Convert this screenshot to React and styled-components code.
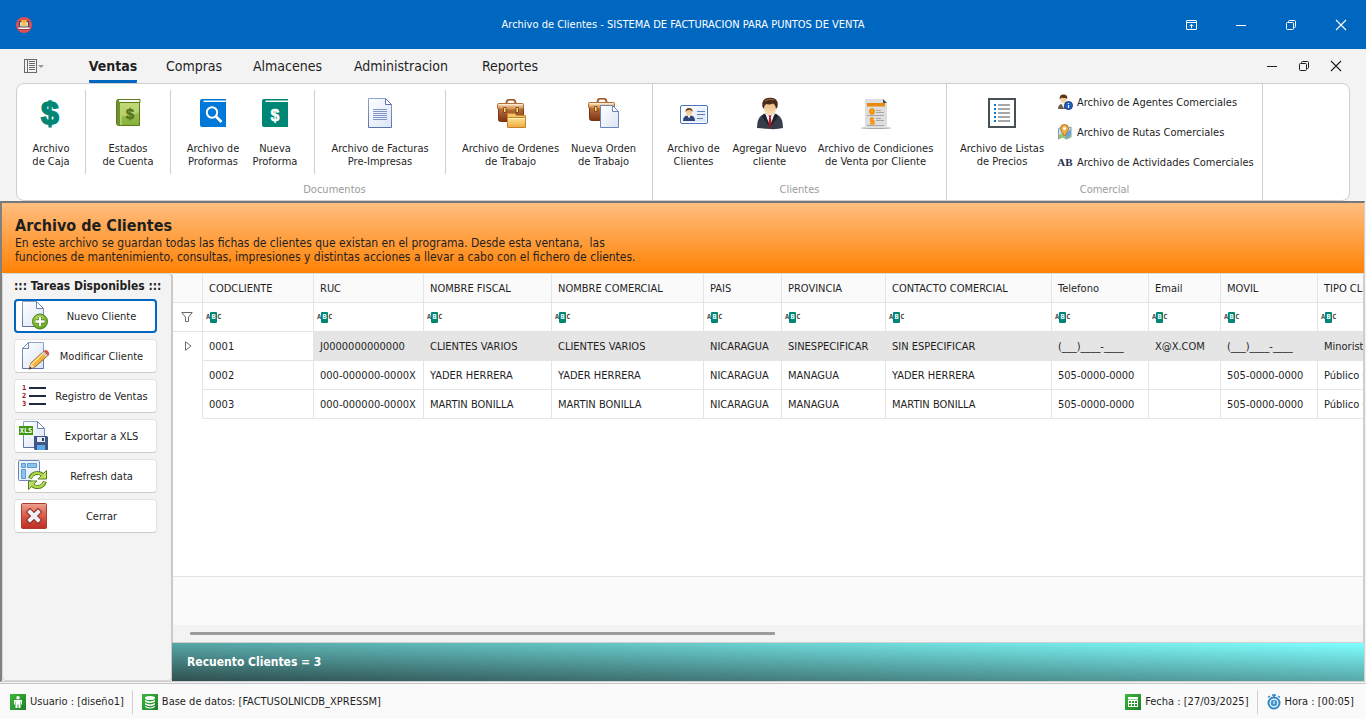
import React from 'react';
import styled, { createGlobalStyle } from 'styled-components';

const GlobalStyle = createGlobalStyle`
  * {
    box-sizing: border-box;
  }

  body {
    margin: 0;
    background: #f3f3f3;
    color: #1f1f1f;
    font-family: "DejaVu Sans Condensed", Tahoma, "Noto Sans", sans-serif;
    font-size: 11px;
    line-height: 13px;
  }

  button,
  input {
    font: inherit;
    color: inherit;
    margin: 0;
    padding: 0;
    border: 0;
    background: transparent;
  }

  svg {
    display: block;
    flex: none;
    overflow: visible;
  }
`;

const Window = styled.div`
  display: flex;
  flex-direction: column;
  min-height: 100vh;
  overflow: hidden;
`;

/* ---------- title bar ---------- */

const TitleBar = styled.header`
  display: grid;
  grid-template-columns: 1fr auto 1fr;
  align-items: center;
  height: 49px;
  background: #0067c0;
  color: #fff;
`;

const AppMenu = styled.div`
  padding-left: 16px;
`;

const Title = styled.h1`
  margin: 0;
  font-size: 11px;
  line-height: 14px;
  font-weight: 400;
`;

const WindowButtons = styled.div`
  display: flex;
  justify-content: flex-end;
`;

const WindowButton = styled.button`
  display: flex;
  align-items: center;
  justify-content: center;
  width: ${(p) => (p.$small ? 32 : 50)}px;
  height: 32px;
`;

/* ---------- ribbon ---------- */

const TabBar = styled.nav`
  display: flex;
  align-items: center;
  height: 34px;
  padding: 0 14px 0 24px;
`;

const FileMenu = styled.button`
  display: flex;
  align-items: center;
  width: 51px;
  height: 34px;
`;

const Tab = styled.button`
  display: flex;
  justify-content: center;
  width: ${(p) => p.$width}px;
  height: 34px;
  font-size: 14px;
  line-height: 34px;
  font-weight: ${(p) => (p.$active ? 700 : 400)};

  span {
    height: 34px;
    border-bottom: 3px solid ${(p) => (p.$active ? '#0067c0' : 'transparent')};
    border-radius: 1px;
  }
`;

const Spacer = styled.div`
  flex: 1;
`;

const Ribbon = styled.section`
  display: flex;
  height: 118px;
  margin: 0 16px;
  border: 1px solid #cfcfcf;
  border-radius: 8px;
  background: #fff;
`;

const Group = styled.section`
  display: flex;
  flex-direction: column;
  width: ${(p) => p.$width}px;
  border-right: 1px solid #cfcfcf;
`;

const GroupBody = styled.div`
  display: flex;
  height: 99px;
  padding-top: 3px;
`;

const GroupCaption = styled.h2`
  margin: 0;
  font-size: 11px;
  font-weight: 400;
  color: #9b9b9b;
  text-align: center;
`;

const SubGroup = styled.div`
  display: flex;
  justify-content: center;
  gap: 1px;
  flex: ${(p) => (p.$width ? 'none' : 1)};
  width: ${(p) => (p.$width ? `${p.$width}px` : 'auto')};
  height: 84px;
  margin-top: 3px;
  border-right: ${(p) => (p.$width ? '1px solid #cfcfcf' : 'none')};
`;

const LargeButton = styled.button`
  display: flex;
  flex-direction: column;
  align-items: center;
  gap: 13px;
  width: ${(p) => p.$width}px;
  padding-top: 7px;
  white-space: pre;
`;

const SmallList = styled.div`
  display: flex;
  flex-direction: column;
  width: 205px;
`;

const SmallButton = styled.button`
  display: flex;
  align-items: center;
  gap: 4px;
  height: 30px;
  white-space: nowrap;
`;

/* ---------- client window ---------- */

const Frame = styled.main`
  display: flex;
  flex-direction: column;
  flex: 1;
  margin-right: 1px;
  border: 1px solid #cfcfcf;
  border-top: 2px solid #77777a;
  border-left: 2px solid #808080;
`;

const Banner = styled.div`
  height: 70px;
  padding: 13px 13px 0;
  background: linear-gradient(#ffbe80, #ff8204);

  h2 {
    margin: 0;
    font-size: 16px;
    line-height: 20px;
  }

  p {
    margin: 0;
    font-size: 12px;
    line-height: 14px;
    white-space: pre-wrap;
  }
`;

const Body = styled.div`
  display: flex;
  flex: 1;
`;

const TaskPanel = styled.aside`
  display: flex;
  flex-direction: column;
  gap: 6px;
  width: 171px;
  padding: 5px 0 5px 11px;
  border: 1px solid #d6d6d6;
  border-right-width: 2px;
  border-right-color: #cacaca;
  border-radius: 4px;

  h3 {
    margin: 0;
    font-size: 12px;
    line-height: 14px;
    white-space: nowrap;
  }
`;

const TaskButton = styled.button`
  display: flex;
  align-items: center;
  width: 143px;
  height: 34px;
  padding: 0 ${(p) => (p.$active ? 2 : 3)}px;
  border: ${(p) => (p.$active ? '2px solid #0067c0' : '1px solid #e2e2e2')};
  border-bottom-color: ${(p) => (p.$active ? '#0067c0' : '#cccccc')};
  border-radius: 4px;
  background: #fff;

  span {
    flex: 1;
    text-align: center;
    white-space: nowrap;
  }
`;

const DataSide = styled.section`
  display: flex;
  flex-direction: column;
  flex: 1;
  min-width: 0;
`;

const Grid = styled.div`
  flex: 1;
  overflow: hidden;
  background: #fff;
  border-top: 1px solid #dcdcdc;
  border-right: 1px solid #cfcfcf;
`;

const Table = styled.table`
  width: 1254px;
  table-layout: fixed;
  border-collapse: separate;
  border-spacing: 0;

  th,
  td {
    height: 29px;
    padding: 0 0 0 6px;
    border-right: 1px solid #e4e4e4;
    border-bottom: 1px solid #e4e4e4;
    font-weight: 400;
    text-align: left;
    white-space: nowrap;
    overflow: hidden;
  }

  thead th {
    background: #fafafa;
  }
`;

const FilterCell = styled.td`
  && {
    padding-left: ${(p) => (p.$icon ? 8 : 3)}px;
  }
`;

const FilterBox = styled.label`
  display: flex;
  align-items: center;
  gap: 4px;

  input {
    flex: 1;
    min-width: 0;
    outline: none;
  }
`;

const Abc = styled.span`
  display: flex;
  align-items: center;
  font: 700 7px/11px "DejaVu Sans Mono", monospace;
  color: #4a4a4a;

  b {
    width: 7px;
    border-radius: 1px;
    background: #008675;
    color: #fff;
    text-align: center;
  }
`;

const Indicator = styled.td`
  && {
    padding-left: 11px;
    border-bottom-color: transparent;
  }
`;

const DataRow = styled.tr`
  td:nth-child(n + 3) {
    background: ${(p) => (p.$selected ? '#e5e5e5' : '#fff')};
    border-color: ${(p) => (p.$selected ? '#e5e5e5' : '#e4e4e4')};
  }
`;

const GridFooter = styled.div`
  height: 49px;
  border-top: 1px solid #e4e4e4;
  border-right: 1px solid #cfcfcf;
  background: #fafafa;
`;

const ScrollTrack = styled.div`
  display: flex;
  align-items: center;
  height: 18px;
  padding: 0 4px 0 17px;
  border-right: 1px solid #cfcfcf;
  border-bottom: 1px solid #cfcfcf;
`;

const ScrollThumb = styled.div`
  width: 50%;
  height: 3px;
  border-radius: 1px;
  background: #9b9b9b;
`;

const CountBar = styled.div`
  height: 38px;
  margin-left: -1px;
  padding-left: 15px;
  background: linear-gradient(to top right, #2f4f4f, #80ffff);
  color: #fff;
  font-size: 12px;
  font-weight: 700;
  line-height: 38px;
`;

/* ---------- status bar ---------- */

const StatusBar = styled.footer`
  display: flex;
  align-items: center;
  height: 36px;
  margin-top: 1px;
  padding: 0 12px 0 10px;
  border-top: 1px solid #c6c6c6;
  background: #fafafa;
`;

const StatusItem = styled.div`
  display: flex;
  align-items: center;
  gap: 4px;
  white-space: nowrap;

  & + & {
    margin-left: 8px;
    padding-left: 9px;
    border-left: 1px solid #cfcfcf;
    height: 24px;
  }
`;

/* ---------- icons ---------- */

const Svg = ({ w = 32, h = w, children, ...rest }) => (
  <svg width={w} height={h} viewBox={`0 0 ${w} ${h}`} fill="none" aria-hidden="true" {...rest}>
    {children}
  </svg>
);

const Gradients = () => (
  <svg width="0" height="0" style={{ position: 'absolute' }} aria-hidden="true">
    <defs>
      <linearGradient id="paper" x1="0" y1="0" x2="1" y2="1">
        <stop offset="0" stopColor="#ffffff" />
        <stop offset="1" stopColor="#dbe5f5" />
      </linearGradient>
      <linearGradient id="paperEdge" x1="0" y1="0" x2="0" y2="1">
        <stop offset="0" stopColor="#8fa3cf" />
        <stop offset="1" stopColor="#5a73ad" />
      </linearGradient>
      <linearGradient id="bookGreen" x1="0" y1="0" x2="0" y2="1">
        <stop offset="0" stopColor="#b3cf63" />
        <stop offset="1" stopColor="#86b03a" />
      </linearGradient>
      <linearGradient id="leather" x1="0" y1="0" x2="0" y2="1">
        <stop offset="0" stopColor="#c9794a" />
        <stop offset="1" stopColor="#7c3410" />
      </linearGradient>
      <linearGradient id="flap" x1="0" y1="0" x2="0" y2="1">
        <stop offset="0" stopColor="#f3cd9f" />
        <stop offset="1" stopColor="#d08a48" />
      </linearGradient>
      <linearGradient id="folder" x1="0" y1="0" x2="0" y2="1">
        <stop offset="0" stopColor="#ffe596" />
        <stop offset="1" stopColor="#eeaa3e" />
      </linearGradient>
      <linearGradient id="face" x1="0" y1="0" x2="0" y2="1">
        <stop offset="0" stopColor="#e8b27c" />
        <stop offset="1" stopColor="#fbe0b5" />
      </linearGradient>
      <linearGradient id="red" x1="0" y1="0" x2="0" y2="1">
        <stop offset="0" stopColor="#eda291" />
        <stop offset="0.45" stopColor="#d9604d" />
        <stop offset="1" stopColor="#bd2d22" />
      </linearGradient>
      <linearGradient id="status" x1="0" y1="0" x2="1" y2="1">
        <stop offset="0" stopColor="#3cb83c" />
        <stop offset="1" stopColor="#1e7d28" />
      </linearGradient>
      <radialGradient id="greenBall" cx="0.4" cy="0.3" r="0.8">
        <stop offset="0" stopColor="#b9e05c" />
        <stop offset="1" stopColor="#4f9a14" />
      </radialGradient>
    </defs>
  </svg>
);

const MinimizeIcon = () => (
  <Svg w={12}><path d="M1 6.5h10" stroke="currentColor" /></Svg>
);

const RestoreIcon = () => (
  <Svg w={12}>
    <rect x="1.5" y="3.5" width="7" height="7" rx="1" stroke="currentColor" />
    <path d="M3.500 3.500V2.500a1 1 0 0 1 1-1h5a1 1 0 0 1 1 1v5a1 1 0 0 1-1 1h-1" stroke="currentColor" />
  </Svg>
);

const CloseIcon = () => (
  <Svg w={12}><path d="M1 1l10 10M11 1L1 11" stroke="currentColor" strokeWidth="1.1" /></Svg>
);

const RibbonModeIcon = () => (
  <Svg w={12}>
    <rect x="1.500" y="1.500" width="10" height="9" rx="0.500" stroke="currentColor" />
    <path d="M1.500 3.500h10M6.500 9.500V5.500M4.500 7.300l2-2 2 2" stroke="currentColor" />
  </Svg>
);

const AppIcon = () => (
  <Svg w={16}>
    <circle cx="8" cy="8" r="8" fill="#e04f4f" />
    <path d="M3 4h10v6.500H3z" fill="#324a5e" />
    <path d="M4 5h8v4.500H4z" fill="#cfd9e2" />
    <path d="M5.500 3h5v6h-5z" fill="#ffc74d" />
    <path d="M7.300 3h1.400v2.500H7.300z" fill="#e8912c" />
    <path d="M2.500 10.500h11v1.500h-11z" fill="#f4f6f8" />
    <path d="M2.500 12h11v.8h-11z" fill="#8a3340" />
  </Svg>
);

const FileMenuIcon = () => (
  <Svg w={20} h={14}>
    <rect x="0.5" y="0.500" width="12" height="13" stroke="#6a6a6a" />
    <path d="M3.500 0v14" stroke="#6a6a6a" />
    <path d="M5 2.500h6M5 4.500h6M5 6.500h6M5 8.500h6M5 10.500h6" stroke="#6a6a6a" />
    <path d="M14 6h6l-3 3z" fill="#9a9a9a" />
  </Svg>
);

const DollarIcon = () => (
  <Svg>
    <text x="15" y="27" textAnchor="middle" fontFamily="Liberation Sans" fontWeight="700" fontSize="32" fill="#008675" stroke="#008675" strokeWidth="1.600">$</text>
  </Svg>
);

const LedgerIcon = () => (
  <Svg>
    <path d="M6 2.500h22v3H5z" fill="#eef3df" stroke="#5e7c22" />
    <path d="M4.500 4.500q0-2 2-2v3h21v23h-21q-2 0-2-2z" fill="url(#bookGreen)" stroke="#5b7a20" />
    <path d="M5 4h3v24H6.500q-1.500 0-1.500-1.500z" fill="#6f9130" />
    <path d="M9 6v22" stroke="#d3e59c" />
    <path d="M10 6h17v9q-8 5-17 4z" fill="#d3e58e" opacity="0.5" />
    <path d="M7 4h20" stroke="#fff" strokeWidth="1.500" />
    <text x="18" y="22" textAnchor="middle" fontFamily="Liberation Sans" fontWeight="700" fontSize="15" fill="#55731b" stroke="#55731b" strokeWidth="0.500">$</text>
  </Svg>
);

const SearchBookIcon = () => (
  <Svg>
    <path d="M5 2h24v1.500H6.500V5H29v25H5a2 2 0 0 1-2-2V4a2 2 0 0 1 2-2z" fill="#0078d7" />
    <circle cx="15" cy="15.500" r="5.200" stroke="#fff" strokeWidth="2" />
    <path d="M19 19.500l5.500 5.500" stroke="#fff" strokeWidth="2.600" />
  </Svg>
);

const DollarBookIcon = () => (
  <Svg>
    <path d="M5 2h24v1.500H6.500V5H29v25H5a2 2 0 0 1-2-2V4a2 2 0 0 1 2-2z" fill="#008675" />
    <text x="16" y="23.500" textAnchor="middle" fontFamily="Liberation Sans" fontWeight="700" fontSize="16" fill="#fff" stroke="#fff" strokeWidth="0.500">$</text>
  </Svg>
);

const DocumentIcon = () => (
  <Svg>
    <path d="M4.500 1.500h17l6 6v23h-23z" fill="url(#paper)" stroke="url(#paperEdge)" />
    <path d="M21.500 1.500v6h6z" fill="#fff" stroke="#5f76ad" />
    <path d="M9 12.500h14M9 14.500h14M9 16.500h14M9 18.500h14M9 20.500h14M9 22.500h14" stroke="#7f95c8" />
  </Svg>
);

const Briefcase = () => (
  <>
    <path d="M11.500 7q0-4 2-4h5q2 0 2 4" stroke="#9a5a36" strokeWidth="2" />
    <path d="M12.500 6q0-2.500 1.500-2.500h4q1.500 0 1.500 2.500" stroke="#d9a883" strokeWidth="0.800" />
    <rect x="3.500" y="9.500" width="25" height="15" rx="2" fill="url(#leather)" stroke="#7a3612" />
    <path d="M2.500 7.500q0-1 1-1h24q1 0 1 1v4q-6 1.500-13 1.500t-13-1.500z" fill="url(#flap)" stroke="#b0703a" />
    <path d="M3.500 7h24v1.500h-24z" fill="#fae5c8" />
    <path d="M8.500 10.500h2.500v5H8.500zM21 10.500h2.500v5H21z" fill="#ffe26a" stroke="#6e3510" strokeWidth="0.800" />
  </>
);

const OrdersIcon = () => (
  <Svg>
    <Briefcase />
    <path d="M12.500 30.500v-14h7l2 2h9v12z" fill="#f2c767" stroke="#c98a2c" />
    <rect x="12.500" y="20.500" width="18" height="10" rx="1" fill="url(#folder)" stroke="#c4832a" />
    <path d="M13.500 21.500h16" stroke="#fff3c0" />
  </Svg>
);

const NewOrderIcon = () => (
  <Svg>
    <g transform="translate(-2 -1)"><Briefcase /></g>
    <path d="M12.500 8.500h12l6 6v16h-18z" fill="url(#paper)" stroke="#6d84b8" />
    <path d="M24.500 8.500v6h6z" fill="#fff" stroke="#6d84b8" />
  </Svg>
);

const CardIcon = () => (
  <Svg>
    <rect x="2.500" y="8.500" width="27" height="18" rx="1.500" fill="#fff" stroke="#4b74bd" />
    <rect x="4" y="10" width="24" height="15" fill="url(#paper)" />
    <path d="M5 24q0-5 4-5.500h4q4 .5 4 5.500z" fill="#2d4675" />
    <path d="M9.500 18.500l1.500 3 1.500-3z" fill="#fff" />
    <ellipse cx="11" cy="15.500" rx="3" ry="3.700" fill="url(#face)" />
    <path d="M7.500 15q0-4 3.500-4t3.700 4q-1-2-3-2.300Q9 12.500 7.500 15z" fill="#6b3c17" />
    <path d="M19 14.500h8M19 17.500h8M19 21.500h6" stroke="#5d80bc" />
  </Svg>
);

const PersonIcon = () => (
  <Svg>
    <path d="M3 31q0-10 5-13l5-2h6l5 2q5 3 5 13-6 1.500-13 1T3 31z" fill="#373c4a" />
    <path d="M11 17h10l-5 12z" fill="#f1f3f8" />
    <path d="M14.500 18h3l-.7 2.500 1.200 8-2 2.500-2-2.500 1.200-8z" fill="#b3182a" />
    <path d="M10 16.500l-2 3 8 11-4-12zM22 16.500l2 3-8 11 4-12z" fill="#20232d" />
    <ellipse cx="16" cy="11" rx="6" ry="7.500" fill="url(#face)" />
    <path d="M8.500 10Q7 1 15.500 0.800 25 0 23.500 10l-1.500 2q-.5-4.500-3-5.500-4 1.500-6.500.5Q10 8 10 12z" fill="#4a2a18" />
    <path d="M11 4q4-3 9-1" stroke="#9a6a48" />
  </Svg>
);

const ConditionsIcon = () => (
  <Svg>
    <ellipse cx="16" cy="31" rx="15" ry="1" fill="#a9a9a9" />
    <path d="M5 2h18l4 4v25H5z" fill="#dedede" />
    <path d="M23 2l4 4h-4z" fill="#4c4c4c" />
    <path d="M7 6h18v3.500H7z" fill="#e88a10" />
    <circle cx="12" cy="14.500" r="2" stroke="#f98f00" strokeWidth="1.800" />
    <path d="M12 11v7M12 20v8" stroke="#f98f00" strokeWidth="1.200" />
    <path d="M14.200 21.500h-3.500v2.500h3.200v2.500H10" stroke="#f98f00" strokeWidth="1.500" />
    <path d="M16 13.500h5M16 15.500h8M7 18.500h17M16 21.500h5M16 23.500h8M7 28.500h17" stroke="#a5abab" />
  </Svg>
);

const PriceListIcon = () => (
  <Svg>
    <rect x="3" y="2" width="26" height="28" stroke="#465055" strokeWidth="2" />
    <path d="M8 8h2M8 12h2M8 16h2M8 20h2M8 24h2" stroke="#0078d7" strokeWidth="2" />
    <path d="M12 8h12M12 12h12M12 16h12M12 20h12M12 24h12" stroke="#a4a7ab" strokeWidth="2" />
  </Svg>
);

const AgentIcon = () => (
  <Svg w={16}>
    <path d="M1 15q0-4 3-5h4q4 1 4 5z" fill="#6c5f52" />
    <path d="M4.500 10l2 4 2-4z" fill="#f5f5f5" />
    <ellipse cx="6.500" cy="5.500" rx="3" ry="4" fill="url(#face)" />
    <path d="M2.800 5.500Q2 .5 6.500.5T10.200 5.500L9 4Q6 4 4.500 3.500z" fill="#5c3218" />
    <circle cx="11.500" cy="11.500" r="4" fill="#1f5fc4" stroke="#173f8a" />
    <path d="M11.500 11v3M11.500 9v1" stroke="#fff" strokeWidth="1.200" />
  </Svg>
);

const RouteIcon = () => (
  <Svg w={16}>
    <path d="M1.500 4.500l4-1.500 4 2 4.500-2v10l-4.500 2-4-2-4 2z" fill="#cfe3ee" stroke="#7f9db0" />
    <path d="M2 11l4-2 8 1v3l-4.500 2-4-2-3.500 1.500z" fill="#9cc46a" />
    <path d="M9 9l5-4v6l-5 4z" fill="#6aa7d8" />
    <path d="M7.500 12Q3.500 7 3.500 4.500a4 4 0 0 1 8 0Q11.500 7 7.500 12z" fill="#f0b04a" stroke="#b27420" />
    <circle cx="7.500" cy="4.500" r="1.500" fill="#fff" />
  </Svg>
);

const AbIcon = () => (
  <Svg w={16}>
    <text x="8" y="12" textAnchor="middle" fontFamily="Liberation Serif" fontWeight="700" fontSize="11" fill="#26304f">AB</text>
  </Svg>
);

const NewClientIcon = () => (
  <Svg>
    <path d="M4.500 1.500v25h21v-18l-7-7z" fill="url(#paper)" stroke="url(#paperEdge)" />
    <path d="M18.500 1.500v7h7z" fill="#fff" stroke="#6d84b8" />
    <circle cx="22" cy="21.500" r="7.500" fill="url(#greenBall)" stroke="#4b7d1d" />
    <path d="M22 17v9M17.500 21.500h9" stroke="#4b7d1d" strokeWidth="4" />
    <path d="M22 17v9M17.500 21.500h9" stroke="#fff" strokeWidth="2.400" />
  </Svg>
);

const EditIcon = () => (
  <Svg>
    <path d="M10.500 2.500h15v26h-21v-20z" fill="url(#paper)" stroke="url(#paperEdge)" />
    <path d="M10.500 2.500v6h-6z" fill="#fff" stroke="#6d84b8" />
    <path d="M11 29l2-6 13-12 4.500 4-13.500 12z" fill="#f4b13f" stroke="#9a6420" />
    <path d="M14 24l12-11.500" stroke="#ffe49a" strokeWidth="1.500" />
    <path d="M24 13l4 4 1.500-1.500-4-4z" fill="#c9ccd6" />
    <path d="M26 11l1.500-1.200q3 .7 4 4L30 15.500z" fill="#d1544f" />
    <path d="M11 29l2-6 3.500 4z" fill="#f7dcae" />
    <path d="M11 29.500l1-3 2 2z" fill="#2b2b2b" />
  </Svg>
);

const NumberedIcon = () => (
  <Svg>
    <g fontFamily="DejaVu Sans Mono" fontWeight="700" fontSize="7" fill="#9a1414">
      <text x="4" y="10">1</text>
      <text x="4" y="18">2</text>
      <text x="4" y="26">3</text>
    </g>
    <path d="M11 8h17M11 16h17M11 24h17" stroke="#1f2b44" strokeWidth="2" />
  </Svg>
);

const XlsIcon = () => (
  <Svg>
    <path d="M5.500 1.500h14l7 7v19h-21z" fill="url(#paper)" stroke="url(#paperEdge)" />
    <path d="M19.500 1.500v7h7z" fill="#fff" stroke="#6d84b8" />
    <rect x="1" y="6" width="14" height="9" fill="#3f9610" />
    <text x="8" y="13" textAnchor="middle" fontFamily="DejaVu Sans Mono" fontWeight="700" fontSize="7" fill="#fff">XLS</text>
    <path d="M16 16h13l1 1v13H17l-1-1z" fill="#3d5683" />
    <path d="M19 17h8v5h-8z" fill="#e5ebf5" />
    <path d="M24 18h2v3h-2z" fill="#2a3b60" />
    <path d="M19 25h8v5h-8z" fill="#5aa9e6" />
  </Svg>
);

const RefreshArrow = () => (
  <>
    <path d="M12 18.500Q14 13 19.500 13q3.500 0 5 2" stroke="#55801f" strokeWidth="4" />
    <path d="M28.500 10.500v8.500h-8.500z" fill="#c3e06a" stroke="#55801f" />
    <path d="M12.500 18Q14.500 13 19.500 13q3.500 0 6 3" stroke="#b4d850" strokeWidth="2.200" />
  </>
);

const RefreshIcon = () => (
  <Svg>
    <rect x="0.5" y="0.500" width="21" height="20" rx="1" fill="#eaf1fb" stroke="#6d84c0" />
    <path d="M3.500 3.500h4v4h-4zM9.500 3.500h9v4h-9zM3.500 9.500h4v9h-4z" fill="#8cc3ec" stroke="#5f9ccb" />
    <circle cx="20" cy="20" r="7" fill="#fff" />
    <RefreshArrow />
    <g transform="rotate(180 19.500 20)"><RefreshArrow /></g>
  </Svg>
);

const ExitIcon = () => (
  <Svg>
    <rect x="3.500" y="3.500" width="25" height="25" rx="1" fill="url(#red)" stroke="#b03a30" />
    <path d="M12 12l8 8M20 12l-8 8" stroke="#8e211a" strokeWidth="6" strokeLinecap="square" />
    <path d="M12 12l8 8M20 12l-8 8" stroke="#eef0f8" strokeWidth="4" strokeLinecap="square" />
  </Svg>
);

const FunnelIcon = () => (
  <Svg w={12}>
    <path d="M.8 1.500h10.400L7.500 6.200v4.300h-3V6.200z" stroke="#6a6a6a" />
  </Svg>
);

const RowArrowIcon = () => (
  <Svg w={8} h={10}><path d="M1.500 0.800l5.500 4.200-5.500 4.200z" stroke="#6a6a6a" /></Svg>
);

const UserIcon = () => (
  <Svg w={16}>
    <rect width="16" height="16" fill="url(#status)" />
    <circle cx="8" cy="3.800" r="1.800" fill="#fff" />
    <path d="M4 6h8v4.500h-1V7.500h-.5V14H8.500v-3.500h-1V14h-2V7.500H5v3H4z" fill="#fff" />
  </Svg>
);

const DatabaseIcon = () => (
  <Svg w={16}>
    <rect width="16" height="16" fill="url(#status)" />
    <ellipse cx="8" cy="4" rx="5" ry="2" fill="#fff" />
    <path d="M3 6q5 2.800 10 0v1.500q-5 3-10 0zM3 9q5 2.800 10 0v1.500q-5 3-10 0zM3 12q5 2.800 10 0v1q-5 3-10 0z" fill="#fff" />
  </Svg>
);

const CalendarIcon = () => (
  <Svg w={16}>
    <rect width="16" height="16" fill="url(#status)" />
    <path d="M3 3h10v2.500H3z" fill="#fff" />
    <rect x="3.500" y="6.500" width="9" height="6" stroke="#fff" />
    <path d="M3.500 9.500h9M6.500 6.500v6M9.500 6.500v6" stroke="#fff" />
  </Svg>
);

const ClockIcon = () => (
  <Svg w={14} h={16}>
    <circle cx="7" cy="9" r="5.500" fill="#fff" stroke="#2f86c5" strokeWidth="2" />
    <circle cx="7" cy="9" r="3.300" fill="#3f97d3" />
    <path d="M7 7v3" stroke="#fff" />
    <path d="M5 1h4M7 1v2.500M1 3.500l2-1.500M13 3.500l-2-1.500" stroke="#2f86c5" strokeWidth="1.500" />
  </Svg>
);

/* ---------- data ---------- */

const tabs = [
  ['Ventas', 76],
  ['Compras', 86],
  ['Almacenes', 101],
  ['Administracion', 126],
  ['Reportes', 92],
];

const groups = [
  {
    name: 'Documentos',
    width: 636,
    parts: [
      { width: 69, items: [['Archivo\nde Caja', DollarIcon, 64]] },
      { width: 85, items: [['Estados\nde Cuenta', LedgerIcon, 64]] },
      { width: 144, items: [['Archivo de\nProformas', SearchBookIcon, 64], ['Nueva\nProforma', DollarBookIcon, 58]] },
      { width: 131, items: [['Archivo de Facturas\nPre-Impresas', DocumentIcon, 108]] },
      { items: [['Archivo de Ordenes\nde Trabajo', OrdersIcon, 108], ['Nueva Orden\nde Trabajo', NewOrderIcon, 76]] },
    ],
  },
  {
    name: 'Clientes',
    width: 294,
    parts: [
      {
        items: [
          ['Archivo de\nClientes', CardIcon, 64],
          ['Agregar Nuevo\ncliente', PersonIcon, 86],
          ['Archivo de Condiciones\nde Venta por Cliente', ConditionsIcon, 124],
        ],
      },
    ],
  },
  {
    name: 'Comercial',
    width: 316,
    parts: [{ items: [['Archivo de Listas\nde Precios', PriceListIcon, 94]] }],
    list: [
      ['Archivo de Agentes Comerciales', AgentIcon],
      ['Archivo de Rutas Comerciales', RouteIcon],
      ['Archivo de Actividades Comerciales', AbIcon],
    ],
  },
];

const tasks = [
  ['Nuevo Cliente', NewClientIcon],
  ['Modificar Cliente', EditIcon],
  ['Registro de Ventas', NumberedIcon],
  ['Exportar a XLS', XlsIcon],
  ['Refresh data', RefreshIcon],
  ['Cerrar', ExitIcon],
];

const columns = [
  ['CODCLIENTE', 111],
  ['RUC', 110],
  ['NOMBRE FISCAL', 128],
  ['NOMBRE COMERCIAL', 152],
  ['PAIS', 78],
  ['PROVINCIA', 104],
  ['CONTACTO COMERCIAL', 166],
  ['Telefono', 97],
  ['Email', 72],
  ['MOVIL', 97],
  ['TIPO CLIENTE', 109],
];

const rows = [
  ['0001', 'J0000000000000', 'CLIENTES VARIOS', 'CLIENTES VARIOS', 'NICARAGUA', 'SINESPECIFICAR', 'SIN ESPECIFICAR', '(___)____-____', 'X@X.COM', '(___)____-____', 'Minorista'],
  ['0002', '000-000000-0000X', 'YADER HERRERA', 'YADER HERRERA', 'NICARAGUA', 'MANAGUA', 'YADER HERRERA', '505-0000-0000', '', '505-0000-0000', 'Público General'],
  ['0003', '000-000000-0000X', 'MARTIN BONILLA', 'MARTIN BONILLA', 'NICARAGUA', 'MANAGUA', 'MARTIN BONILLA', '505-0000-0000', '', '505-0000-0000', 'Público General'],
];

const ClientTable = () => (
  <Table>
    <colgroup>
      <col style={{ width: 30 }} />
      {columns.map(([name, width]) => (
        <col key={name} style={{ width }} />
      ))}
    </colgroup>
    <thead>
      <tr>
        <th aria-label="Fila" />
        {columns.map(([name]) => (
          <th key={name} scope="col">{name}</th>
        ))}
      </tr>
    </thead>
    <tbody>
      <tr>
        <FilterCell $icon><FunnelIcon /></FilterCell>
        {columns.map(([name]) => (
          <FilterCell key={name}>
            <FilterBox>
              <Abc aria-hidden="true">A<b>B</b>C</Abc>
              <input type="text" aria-label={`Filtrar ${name}`} />
            </FilterBox>
          </FilterCell>
        ))}
      </tr>
      {rows.map((row, i) => (
        <DataRow key={row[0]} $selected={i === 0}>
          <Indicator>{i === 0 && <RowArrowIcon />}</Indicator>
          {row.map((value, j) => (
            <td key={columns[j][0]}>{value}</td>
          ))}
        </DataRow>
      ))}
    </tbody>
  </Table>
);

const App = () => {
  return (
    <Window>
      <GlobalStyle />
      <Gradients />

      <TitleBar>
        <AppMenu><AppIcon /></AppMenu>
        <Title>Archivo de Clientes - SISTEMA DE FACTURACION PARA PUNTOS DE VENTA</Title>
        <WindowButtons>
          <WindowButton aria-label="Opciones de cinta"><RibbonModeIcon /></WindowButton>
          <WindowButton aria-label="Minimizar"><MinimizeIcon /></WindowButton>
          <WindowButton aria-label="Restaurar"><RestoreIcon /></WindowButton>
          <WindowButton aria-label="Cerrar"><CloseIcon /></WindowButton>
        </WindowButtons>
      </TitleBar>

      <TabBar>
        <FileMenu aria-label="Archivo"><FileMenuIcon /></FileMenu>
        {tabs.map(([name, width], i) => (
          <Tab key={name} $width={width} $active={i === 0}><span>{name}</span></Tab>
        ))}
        <Spacer />
        <WindowButton $small aria-label="Minimizar ventana"><MinimizeIcon /></WindowButton>
        <WindowButton $small aria-label="Restaurar ventana"><RestoreIcon /></WindowButton>
        <WindowButton $small aria-label="Cerrar ventana"><CloseIcon /></WindowButton>
      </TabBar>

      <Ribbon>
        {groups.map((group) => (
          <Group key={group.name} $width={group.width}>
            <GroupBody>
              {group.parts.map((part, i) => (
                <SubGroup key={i} $width={part.width}>
                  {part.items.map(([label, Icon, width]) => (
                    <LargeButton key={label} $width={width}>
                      <Icon />
                      {label}
                    </LargeButton>
                  ))}
                </SubGroup>
              ))}
              {group.list && (
                <SmallList>
                  {group.list.map(([label, Icon]) => (
                    <SmallButton key={label}>
                      <Icon />
                      {label}
                    </SmallButton>
                  ))}
                </SmallList>
              )}
            </GroupBody>
            <GroupCaption>{group.name}</GroupCaption>
          </Group>
        ))}
      </Ribbon>

      <Frame>
        <Banner>
          <h2>Archivo de Clientes</h2>
          <p>
            {'En este archivo se guardan todas las fichas de clientes que existan en el programa. Desde esta ventana,  las\nfunciones de mantenimiento, consultas, impresiones y distintas acciones a llevar a cabo con el fichero de clientes.'}
          </p>
        </Banner>
        <Body>
          <TaskPanel>
            <h3>::: Tareas Disponibles :::</h3>
            {tasks.map(([label, Icon], i) => (
              <TaskButton key={label} $active={i === 0}>
                <Icon />
                <span>{label}</span>
              </TaskButton>
            ))}
          </TaskPanel>
          <DataSide>
            <Grid><ClientTable /></Grid>
            <GridFooter />
            <ScrollTrack><ScrollThumb /></ScrollTrack>
            <CountBar>Recuento Clientes = 3</CountBar>
          </DataSide>
        </Body>
      </Frame>

      <StatusBar>
        <StatusItem><UserIcon />Usuario : [diseño1]</StatusItem>
        <StatusItem><DatabaseIcon />Base de datos: [FACTUSOLNICDB_XPRESSM]</StatusItem>
        <Spacer />
        <StatusItem><CalendarIcon />Fecha : [27/03/2025]</StatusItem>
        <StatusItem><ClockIcon />Hora : [00:05]</StatusItem>
      </StatusBar>
    </Window>
  );
};

export default App;
